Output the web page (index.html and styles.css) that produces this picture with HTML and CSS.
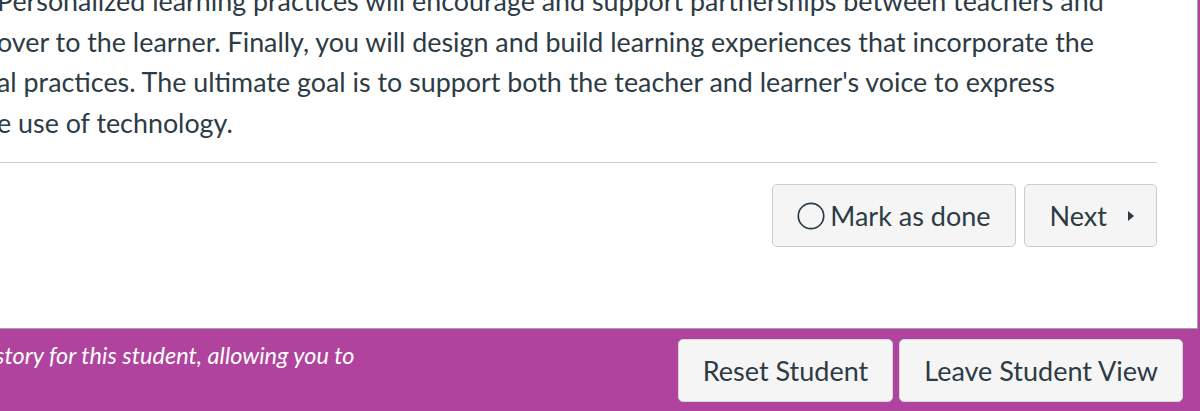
FILE: index.html
```html
<!DOCTYPE html>
<html lang="en">
<head>
<meta charset="utf-8">
<title>Module item</title>
<link rel="stylesheet" href="styles.css">
</head>
<body>
<div class="page">
  <main class="main">
    <div class="column">
      <p class="desc">Personalized learning practices will encourage and support partnerships between teachers and<br>over to the learner. Finally, you will design and build learning experiences that incorporate the<br>al practices. The ultimate goal is to support both the teacher and learner's voice to express<br>e use of technology.</p>
      <hr class="divider">
      <div class="module-nav">
        <button class="btn btn-done" type="button">
          <svg class="icon-circle" width="28" height="28" viewBox="0 0 28 28" aria-hidden="true"><circle cx="14" cy="14" r="12.7" fill="none" stroke="#2d3b45" stroke-width="1.7"/></svg>
          <span>Mark as done</span>
        </button>
        <button class="btn btn-next" type="button">
          <span>Next</span>
          <svg class="icon-arrow" width="6" height="10" viewBox="0 0 6 10" aria-hidden="true"><polygon points="0,0 6,5 0,10" fill="#2d3b45"/></svg>
        </button>
      </div>
    </div>
  </main>
  <footer class="student-bar">
    <p class="student-msg">story for this student, allowing you to</p>
    <div class="student-actions">
      <button class="btn btn-bar btn-reset" type="button">Reset Student</button>
      <button class="btn btn-bar btn-leave" type="button">Leave Student View</button>
    </div>
  </footer>
</div>
</body>
</html>
```

FILE: styles.css
```css
html, body {
  margin: 0;
  padding: 0;
}

body {
  background: #b0439d;
  font-family: Lato, "Liberation Sans", sans-serif;
  overflow: hidden;
  height: 411px;
}

.page {
  display: flex;
  flex-direction: column;
  height: 411px;
}

.main {
  background: #ffffff;
  height: 328px;
  margin-right: 2px;
  padding-right: 40px;
  border-right: 1px solid #9ea3a8;
  border-bottom: 1px solid #9ea3a8;
  overflow: hidden;
  flex: none;
}

.column {
  margin-left: -3px;
}

.desc {
  margin: -19px 0 0;
  font-size: 26.85px;
  line-height: 40.5px;
  color: #2d3b45;
  white-space: nowrap;
}

.divider {
  border: 0;
  border-top: 1px solid #c7cdd1;
  height: 0;
  margin: 19px 0 0;
}

.module-nav {
  display: flex;
  justify-content: flex-end;
  gap: 8px;
  margin-top: 21px;
}

.btn {
  font-family: inherit;
  font-size: 27px;
  line-height: 41px;
  padding: 10px 24px;
  border: 1px solid #c7cdd1;
  border-radius: 5px;
  background: #f5f5f5;
  color: #2d3b45;
  display: inline-flex;
  align-items: center;
  margin: 0;
}

.btn-done {
  gap: 5px;
}

.btn-next {
  gap: 21px;
  padding-left: 25px;
  padding-right: 22px;
}

.icon-circle,
.icon-arrow {
  display: block;
  flex: none;
}

.student-bar {
  display: flex;
  align-items: flex-start;
  padding: 10px 17px 0 0;
  flex: 1;
}

.student-msg {
  flex: 1;
  margin: -1px 0 0 -5px;
  font-size: 23.5px;
  line-height: 34px;
  font-style: italic;
  color: #ffffff;
  white-space: nowrap;
}

.student-actions {
  display: flex;
  gap: 6px;
}

.btn-bar {
  border-color: #d7d7d7;
}
```
